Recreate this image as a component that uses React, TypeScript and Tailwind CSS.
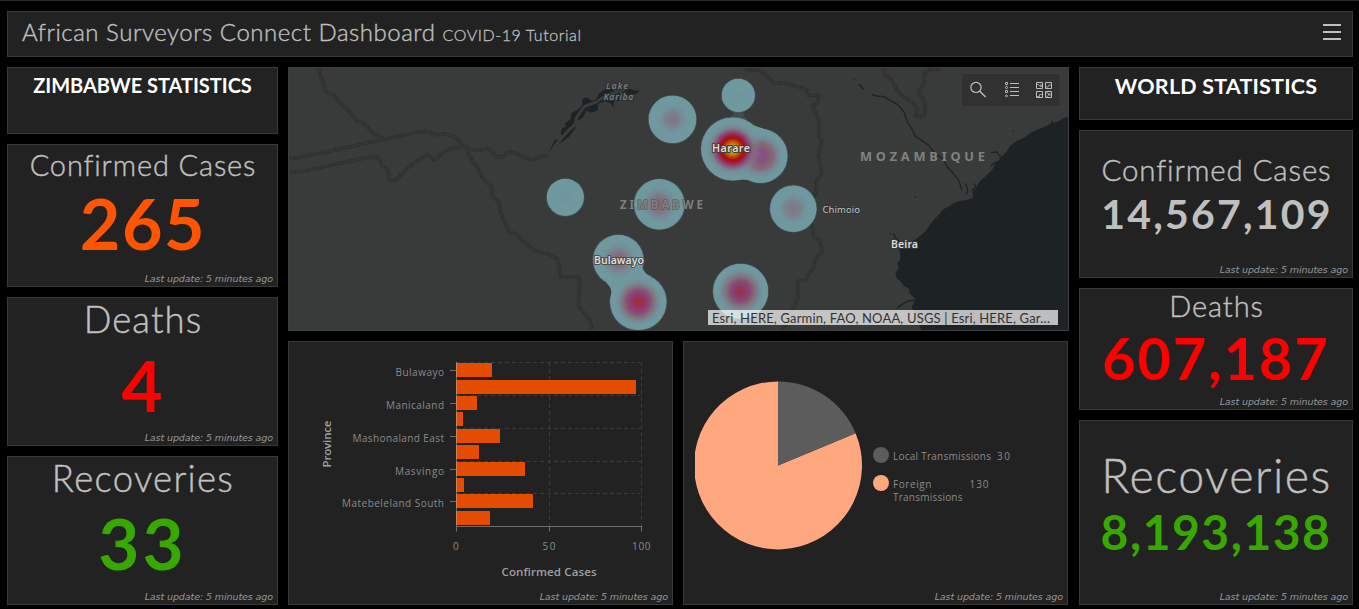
import React from "react";

const card = "border border-[#393939] bg-[#222222]";

function Updated() {
  return (
    <p className="mt-auto self-end pr-1 pb-[1px] font-['DejaVu_Sans','Noto_Sans',sans-serif] text-[9.5px] leading-[13px] tracking-[-0.09px] whitespace-nowrap text-[#979797] italic">
      Last update: 5 minutes ago
    </p>
  );
}

function Stat({ label, value, box, labelClass, valueClass }: { label: string; value: string; box: string; labelClass: string; valueClass: string }) {
  return (
    <section className={`${card} flex flex-col items-center ${box}`}>
      <h3 className={`leading-none font-light whitespace-nowrap text-[#bfbfbf] [-webkit-text-stroke:0.45px_#bfbfbf] ${labelClass}`}>{label}</h3>
      <p className={`leading-none font-bold whitespace-nowrap ${valueClass}`}>{value}</p>
      <Updated />
    </section>
  );
}

function Border({ d }: { d: string }) {
  return (
    <g fill="none" strokeLinejoin="round">
      <path d={d} stroke="#303231" strokeWidth="11" />
      <path d={d} stroke="#393b3a" strokeWidth="3" strokeDasharray="14 7" />
    </g>
  );
}

function Stops({ id, cx, cy, r, stops }: { id: string; cx: number; cy: number; r: number; stops: [number, string, number?][] }) {
  return (
    <radialGradient id={id} gradientUnits="userSpaceOnUse" cx={cx} cy={cy} r={r}>
      {stops.map(([o, c, a]) => (
        <stop key={o} offset={o} stopColor={c} stopOpacity={a ?? 1} />
      ))}
    </radialGradient>
  );
}

const BASE = "#6f999f";

type Spot = { id: string; cx: number; cy: number; r: number; stops: [number, string, number?][] };

const fade: [number, string, number?] = [0.88, BASE, 0];

const westSpots: Spot[] = [
  { id: "w1", cx: 1153, cy: 178, r: 71, stops: [[0, "#80737f"], [0.3, "#7a8190"], [0.75, BASE, 0]] },
  { id: "w2", cx: 832, cy: 412, r: 56, stops: [[0, "#74919b"], [0.7, BASE, 0]] },
  { id: "w3", cx: 1114, cy: 433, r: 76, stops: [[0, "#8a6768"], [0.2, "#846d76"], [0.42, "#7a8190"], [0.82, BASE, 0]] },
  { id: "w4", cx: 991, cy: 600, r: 76, stops: [[0, "#8d6663"], [0.2, "#846d76"], [0.42, "#7a8190"], [0.82, BASE, 0]] },
  { id: "w5", cx: 1051, cy: 726, r: 85, stops: [[0, "#9c2e42"], [0.17, "#98324f"], [0.36, "#87467f"], [0.46, "#865a70"], [0.54, "#82707a"], [0.64, "#7a8190"], fade] },
];

const eastSpots: Spot[] = [
  { id: "e1", cx: 8, cy: 178, r: 71, stops: [[0, "#80737f"], [0.3, "#7a8190"], [0.75, BASE, 0]] },
  { id: "e2", cx: 205, cy: 106, r: 50, stops: [[0, "#73939c"], [0.7, BASE, 0]] },
  { id: "e3", cx: 272, cy: 288, r: 81, stops: [[0, "#865089"], [0.2, "#865080"], [0.36, "#866072"], [0.48, "#846b76"], [0.6, "#7a8190"], [0.9, BASE, 0]] },
  { id: "e4", cx: 188, cy: 267, r: 95, stops: [[0, "#c9b312"], [0.13, "#c79a0c"], [0.24, "#bd5208"], [0.34, "#aa1010"], [0.41, "#a01828"], [0.51, "#8e3d72"], [0.58, "#86557c", 0.9], [0.66, "#82707a", 0.6], [0.74, "#7a8190", 0.4], [0.92, BASE, 0]] },
  { id: "e5", cx: 370, cy: 446, r: 70, stops: [[0, "#7e7784"], [0.35, "#7a838f"], [0.75, BASE, 0]] },
  { id: "e6", cx: 212, cy: 694, r: 83, stops: [[0, "#953250"], [0.16, "#903857"], [0.34, "#84497e"], [0.44, "#845c71"], [0.52, "#80717b"], [0.64, "#7a8190"], fade] },
];

function Heat({ spots, bridge }: { spots: Spot[]; bridge: string }) {
  return (
    <g>
      <defs>
        {spots.map((s) => (
          <Stops key={s.id} {...s} />
        ))}
      </defs>
      <g fill={BASE} stroke={BASE} strokeWidth="5" strokeOpacity="0.35">
        {spots.map((s) => (
          <circle key={s.id} cx={s.cx} cy={s.cy} r={s.r - 1} />
        ))}
      </g>
      <g fill={BASE}>
        <path d={bridge} />
        {spots.map((s) => (
          <circle key={s.id} cx={s.cx} cy={s.cy} r={s.r - 1} />
        ))}
      </g>
      {spots.map((s) => (
        <circle key={s.id} cx={s.cx} cy={s.cy} r={s.r - 1} fill={`url(#${s.id})`} />
      ))}
    </g>
  );
}

function Halo({ x, y, w, size, children, fill = "#dcdcdc", weight = 600, style = "normal", halo = "#333534" }: { x: number; y: number; w: number; size: number; children: string; fill?: string; weight?: number; style?: string; halo?: string }) {
  return (
    <text x={x} y={y} textLength={w} fontSize={size} fontWeight={weight} fontStyle={style} fill={fill} stroke={halo} strokeWidth="2" strokeLinejoin="round" paintOrder="stroke">
      {children}
    </text>
  );
}

function MapDrawing() {
  return (
    <svg viewBox="289 68 779 262" className="block h-full w-full font-['Noto_Sans','Open_Sans',sans-serif]" aria-label="Map of Zimbabwe">
      <rect x="289" y="68" width="779" height="262" fill="#393b3a" />
      <g transform="translate(288 60) scale(0.33333)">
        <Border d="M93 24 97 48 105 62 110 90 122 100 138 104 155 128 180 150 205 182 228 190 258 222 290 238" />
        <Border d="M2 292 22 295 290 238 385 217 420 215 445 225 470 221 500 230 512 240 520 255 537 262 545 268 575 270 598 266 615 275 622 290 645 290 660 276 685 280 705 290 730 301 755 290 782 286" />
        <Border d="M2 337 40 335 130 315 240 292 272 292 282 316 300 330 303 358 313 363 330 355 360 322 395 298 420 284 438 300 450 294 462 278 495 264 530 262" />
        <Border d="M537 262 540 282 570 325 582 352 610 380 613 410 633 425 638 458 662 515 685 522 700 542 715 548 735 570 780 582 805 596 815 620 817 651 872 651 875 665 872 740 890 760 905 780 914 810" />
        <path d="M784 273 790 262 800 240 815 236 825 232 818 222 822 205 835 200 830 190 848 178 850 160 868 150 882 136 884 116 896 112 912 122 925 118 932 102 950 88 965 84 980 94 1005 84 1025 86 1040 92 1055 91 1048 100 1035 104 1040 118 1020 114 1000 122 978 124 975 143 968 130 950 124 930 132 930 150 912 158 895 152 885 172 868 184 860 208 842 232 815 250 800 262 790 282Z" fill="#1d2325" />
        <path d="M784 284 808 248 838 215 862 192 866 172 888 140 925 126 955 106 1000 92 1022 82 1028 60 1028 24" stroke="#3a3b3b" strokeWidth="9" fill="none" />
      </g>
      <g transform="translate(670 60) scale(0.33333)">
        <Border d="M222 26 240 30 265 30 290 48 310 68 350 70 385 80 410 90 412 106 448 106 442 128 426 138 440 165 448 190 446 230 455 240 446 290 456 340 440 362 438 395 425 420 410 470 428 500 430 530 450 540 456 575 435 598 432 620 405 660 382 664 384 710 375 735 350 790 335 810" />
        <Border d="M642 24 645 45 665 58 680 88 700 110 728 128 742 148 735 168 764 168 766 145 762 120 744 98 762 70 764 40 780 28 815 26" />
        <g fill="none" stroke="#1d2325" strokeWidth="4">
          <path d="M553 56v4M566 72l8 8 8 8M606 103l14 5 22 2 20 12 22 12 18 22 10 30 16 24 8 18 20 14 18 12 20 24 26 20 10 20 18 20 16 20 8 20 4 14M887 370l6 20-4 14M910 370l8 10-10 10 4 18 12-20M660 522h4M670 520l6 12 12 14M680 745l20-14 16-8 20-3M734 411h4M1030 211v4M962 278l18-2 14 16M962 320l8-10 14-4" />
        </g>
        <path d="M1200 168 1182 174 1165 184 1150 188 1146 180 1142 190 1130 198 1105 208 1080 220 1062 233 1040 242 1020 258 1012 272 992 294 975 312 966 330 945 350 928 366 922 378 912 392 908 414 890 420 872 422 850 430 835 440 820 448 805 465 788 484 765 515 735 540 712 550 695 552 685 562 690 575 690 600 682 610 686 625 676 640 680 655 692 664 702 678 715 684 720 702 735 716 732 728 724 742 734 756 738 776 748 796 755 812 1200 812Z" fill="#1d2325" />
      </g>
      <g transform="translate(288 60) scale(0.33333)">
        <Heat spots={westSpots} bridge="M1060 610 Q1064 640 1090 650 L1000 760 L966 726 Q980 690 955 668Z" />
      </g>
      <g transform="translate(670 60) scale(0.33333)">
        <path d="M178 176 Q194 166 190 152 L220 152 Q218 166 234 180Z" fill="#424a4a" />
        <Heat spots={eastSpots} bridge="M220 178 Q245 198 292 209 L270 340 L262 368 Q225 354 195 361Z" />
      </g>
      <Halo x={606} y={89} w={22} size={8.8} fill="#7a7d7d" weight={600} style="italic" halo="#2c3030">Lake</Halo>
      <Halo x={603.5} y={100} w={30} size={8.8} fill="#7a7d7d" weight={600} style="italic" halo="#2c3030">Kariba</Halo>
      <text x="620" y="209" textLength="83" fontSize="11.5" fontWeight="700" fill="#7e8080" stroke="#393b3a" strokeWidth="1.5" strokeOpacity="0.5" paintOrder="stroke">ZIMBABWE</text>
      <text x="860" y="160.5" textLength="125" fontSize="12.8" fontWeight="700" fill="#808282">MOZAMBIQUE</text>
      <Halo x={712} y={151.5} w={38} size={10.7} halo="#4a3b3b">Harare</Halo>
      <Halo x={594} y={263.5} w={50} size={10.5} halo="#4a4d4d">Bulawayo</Halo>
      <Halo x={891} y={247.5} w={27} size={10.5}>Beira</Halo>
      <Halo x={822.5} y={213} w={37.5} size={9.5} fill="#c0c0c0" weight={400}>Chimoio</Halo>
    </svg>
  );
}

function MapTools() {
  return (
    <div className="absolute top-[5px] right-[7px] flex h-[34px] w-[100px] border border-[#3d3d3d] bg-[#303130]">
      <svg viewBox="962 74 98 32" className="h-full w-full" fill="none" stroke="#bdbdbd">
        <circle cx="976" cy="87.4" r="5.1" strokeWidth="1.2" />
        <path d="M979.8 91.2 985.6 97" strokeWidth="1.4" />
        <path d="M1010 83.5h9M1010 87.5h9M1010 91.5h9M1010 95.5h9" />
        <path d="M1005.5 82.5h2v2h-2zM1005.5 90.5h2v2h-2z" strokeWidth="0.9" />
        <circle cx="1006.5" cy="87.5" r="1.1" strokeWidth="0.9" />
        <path d="M1006.5 94.7 1007.6 96.3H1005.4z" strokeWidth="0.8" />
        <path d="M1036.5 82.5h6v6h-6zM1045.5 82.5h6v6h-6zM1036.5 91.5h6v6h-6zM1045.5 91.5h6v6h-6z" />
        <path d="M1037 84.5h1.5l1.5 2 2-1M1041 84v3M1046 87h2l1-2h2.5M1037 96.500h2.500v-2h2.500M1046 93h2l1 2h2M1047 97l3-4" strokeWidth="0.8" />
      </svg>
    </div>
  );
}

const bars: [number, number][] = [[363, 36], [380, 180], [396, 21], [412, 7], [429, 44], [445, 23], [462, 69], [478, 8], [494, 77], [511, 34]];
const provinces: [string, number, number][] = [["Bulawayo", 370.5, 48.5], ["Manicaland", 403.5, 58], ["Mashonaland East", 436.5, 91.5], ["Masvingo", 469.5, 49], ["Matebeleland South", 501.5, 102]];

function BarChart() {
  return (
    <svg viewBox="289 342 383 248" className="block h-[248px] w-full shrink-0 font-['Open_Sans','Noto_Sans',sans-serif]">
      <g stroke="#393939" strokeDasharray="4 3">
        {[362.5, 395.5, 428.5, 461.5, 493.5].map((y) => (
          <path key={y} d={`M456 ${y}H641`} />
        ))}
        <path d="M549.5 362V526M641.5 362V526" />
      </g>
      {bars.map(([y, w]) => (
        <rect key={y} x="456" y={y} width={w} height="14" rx="0.5" fill="#e64c00" />
      ))}
      <g stroke="#6e6e6e">
        <path d="M456 526.5H642M456.500 527v4.500M549.500 527v4.500M641.500 527v4.500" />
        <path d="M456.5 362V526" stroke="#b0b0b0" strokeOpacity="0.55" />
      </g>
      <g fontSize="10" fill="#8a8a8a">
        {provinces.map(([name, y, w]) => (
          <g key={name}>
            <path d={`M450 ${y}h6`} stroke="#6e6e6e" />
            <text x={444 - w} y={y + 5} textLength={w}>{name}</text>
          </g>
        ))}
        <text x="453" y="550" textLength="6">0</text>
        <text x="542.500" y="550" textLength="13">50</text>
        <text x="632" y="550" textLength="18.500">100</text>
      </g>
      <g fontSize="11.5" fontWeight="600" fill="#a0a0a0">
        <text x="501.500" y="576" textLength="95">Confirmed Cases</text>
        <text transform="translate(331 467.5) rotate(-90)" textLength="47">Province</text>
      </g>
    </svg>
  );
}

function PieChart() {
  return (
    <svg viewBox="684 342 383 248" className="block h-[248px] w-full shrink-0 font-['Open_Sans','Noto_Sans',sans-serif]">
      <clipPath id="pie"><rect x="695" y="375" width="180" height="180" /></clipPath>
      <path d="M778 465.4V381.4A84 84 0 1 0 855.6 433.250Z" fill="#ffa77f" clipPath="url(#pie)" />
      <path d="M778 465.4V381.4A84 84 0 0 1 855.6 433.250Z" fill="#5c5c5c" />
      <circle cx="881" cy="455" r="8" fill="#5c5c5c" />
      <circle cx="881" cy="483" r="8" fill="#ffa77f" />
      <g fontSize="10" fill="#8a8a8a">
        <text x="893" y="460" textLength="98">Local Transmissions</text>
        <text x="997" y="460" textLength="13">30</text>
        <text x="893" y="488" textLength="38.500">Foreign</text>
        <text x="969.500" y="488" textLength="19">130</text>
        <text x="893" y="501" textLength="69.500">Transmissions</text>
      </g>
    </svg>
  );
}

export default function App() {
  return (
    <div className="flex h-[609px] w-[1359px] flex-col gap-[10px] overflow-hidden border-t border-[#2b2b2b] bg-black pt-[10px] pr-[6px] pb-1 pl-[7px] font-['Lato','Open_Sans',sans-serif]">
      <header className={`${card} flex h-[46px] shrink-0 items-center justify-between pr-[11px] pl-[14px]`}>
        <h1 className="flex items-baseline gap-[7px] pb-[5px] whitespace-nowrap text-[#bfbfbf]">
          <span className="text-2xl leading-none font-light tracking-[0.53px] [-webkit-text-stroke:0.4px_#bfbfbf]">African Surveyors Connect Dashboard</span>
          <span className="text-base leading-none font-light tracking-[0.58px] [-webkit-text-stroke:0.3px_#bfbfbf]">COVID-19 Tutorial</span>
        </h1>
        <button className="flex flex-col gap-[5px] pb-[4px]" aria-label="Menu">
          <span className="h-0.5 w-[18px] bg-[#bfbfbf]" />
          <span className="h-0.5 w-[18px] bg-[#bfbfbf]" />
          <span className="h-0.5 w-[18px] bg-[#bfbfbf]" />
        </button>
      </header>

      <main className="flex min-h-0 flex-1 items-start">
        <div className="mr-[10px] flex w-[271px] flex-col gap-[10px]">
          <section className={`${card} flex h-[67px] justify-center pt-[7px]`}>
            <h2 className="text-[20px] leading-none font-bold tracking-[-0.03px] whitespace-nowrap text-white">ZIMBABWE STATISTICS</h2>
          </section>
          <Stat label="Confirmed Cases" value="265" box="h-[143px] pt-[5px]" labelClass="text-[29px] pl-[1px] tracking-[0.87px]" valueClass="mt-[9px] text-[70px] pl-[1px] tracking-[1.5px] text-[#ff5500]" />
          <Stat label="Deaths" value="4" box="h-[149px] pt-[3px]" labelClass="text-[36.5px] pl-[1px] tracking-[1.1px]" valueClass="mt-[11px] text-[71px] pr-px text-[#ff0000]" />
          <Stat label="Recoveries" value="33" box="h-[149px] pt-[3px]" labelClass="text-[36.5px] pl-[1px] tracking-[1.3px]" valueClass="mt-[10px] text-[71px] tracking-[3px] text-[#38a800]" />
        </div>

        <div className="flex w-[781px] flex-col gap-[10px]">
          <section className="relative h-[264px] border border-[#3d3f3e]">
            <MapDrawing />
            <MapTools />
            <div className="absolute right-[10px] bottom-[5px] h-[15px] w-[350px] bg-white/70 pl-1 text-[13px] leading-[16px] tracking-[0.16px] whitespace-nowrap text-[#323232]">
              Esri, HERE, Garmin, FAO, NOAA, USGS | Esri, HERE, Gar…
            </div>
          </section>
          <div className="flex gap-[10px]">
            <section className={`${card} flex h-[264px] w-[385px] flex-col`}>
              <BarChart />
              <Updated />
            </section>
            <section className={`${card} flex h-[264px] w-[385px] flex-col`}>
              <PieChart />
              <Updated />
            </section>
          </div>
        </div>

        <div className="ml-[10px] flex w-[274px] flex-col gap-[10px]">
          <section className={`${card} flex h-[53px] justify-center pt-[8px]`}>
            <h2 className="text-[21.5px] leading-none font-bold tracking-[0.2px] whitespace-nowrap text-white">WORLD STATISTICS</h2>
          </section>
          <Stat label="Confirmed Cases" value="14,567,109" box="h-[148px] pt-[24px]" labelClass="text-[29.5px] pl-[1px] tracking-[0.85px]" valueClass="mt-[8px] text-[41px] pl-[2px] tracking-[2.2px] text-[#bfbfbf]" />
          <Stat label="Deaths" value="607,187" box="h-[122px] pt-[2px]" labelClass="text-[29px] pl-[1px] tracking-[0.9px]" valueClass="mt-[9px] text-[57.5px] tracking-[2px] text-[#ff0000]" />
          <Stat label="Recoveries" value="8,193,138" box="h-[185px] pt-[31px]" labelClass="text-[46.5px] pl-[1px] tracking-[1.5px]" valueClass="mt-[9px] text-[48px] tracking-[1.5px] text-[#38a800]" />
        </div>
      </main>
    </div>
  );
}
